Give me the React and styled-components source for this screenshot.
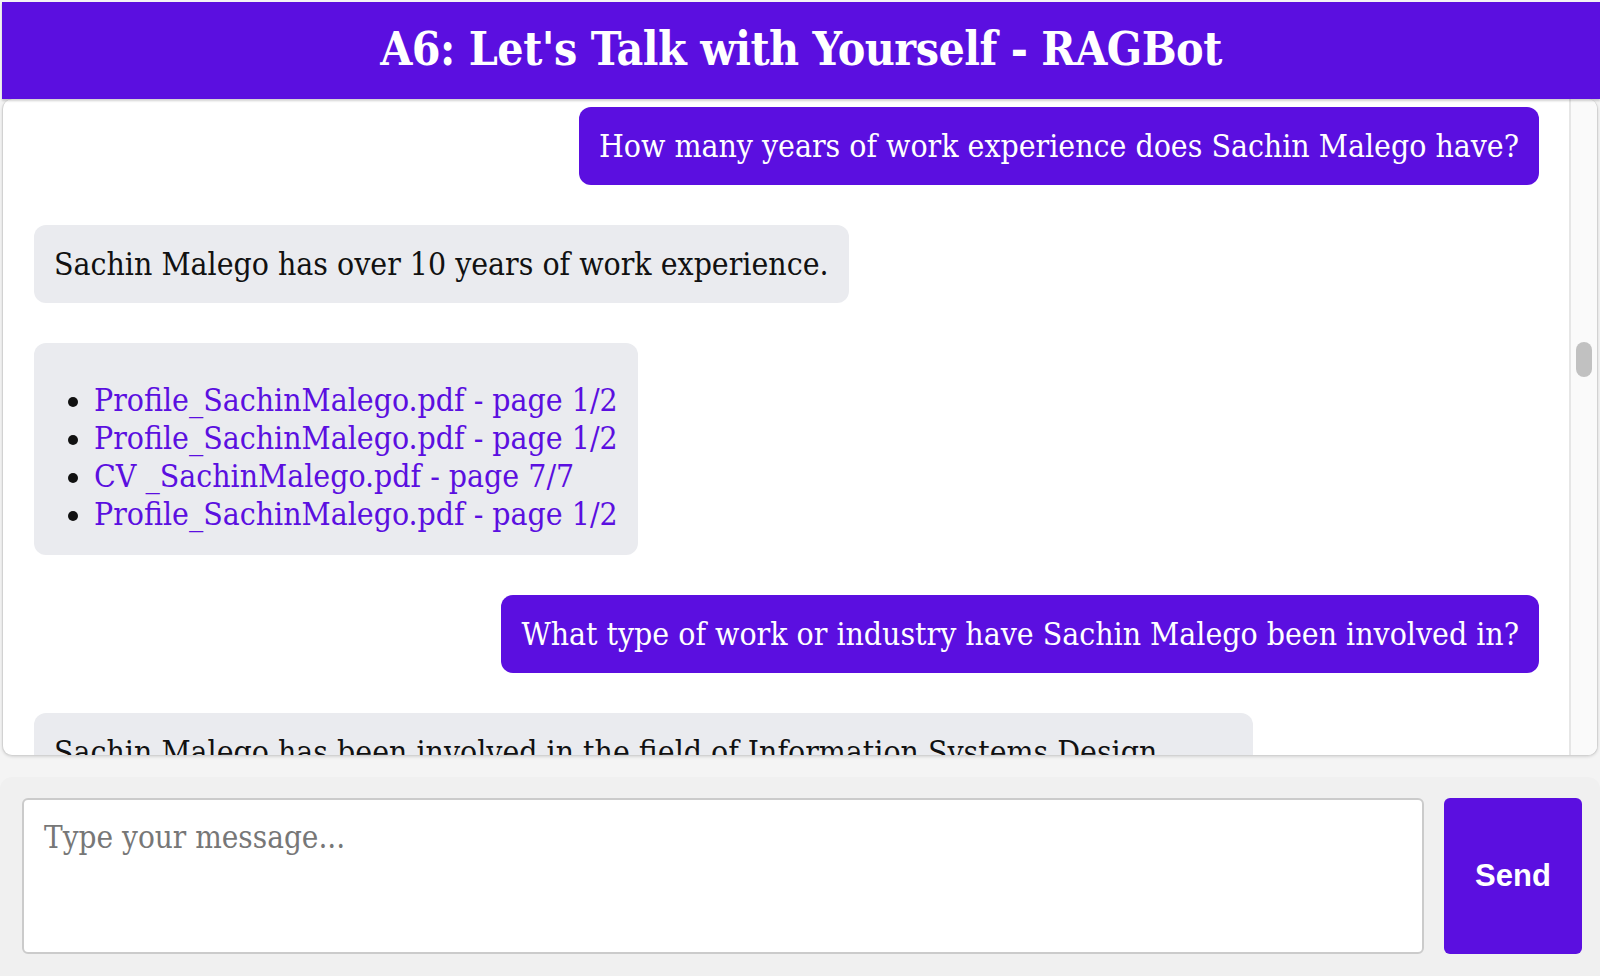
import React from 'react';
import styled, { createGlobalStyle } from 'styled-components';

const PURPLE = '#5b0fe0';
const SERIF = '"DejaVu Serif", "Liberation Serif", serif';

const GlobalStyle = createGlobalStyle`
  html, body {
    margin: 0;
    padding: 0;
    height: 100%;
    background: #f4f4f4;
    overflow: hidden;
  }
  #root {
    height: 100%;
  }
`;

const Page = styled.div`
  display: flex;
  flex-direction: column;
  height: 100vh;
  box-sizing: border-box;
  padding-top: 2px;
`;

const Header = styled.header`
  display: flex;
  align-items: center;
  justify-content: center;
  flex: 0 0 97px;
  box-sizing: border-box;
  padding-bottom: 4px;
  margin-left: 2px;
  background: ${PURPLE};
  box-shadow: 0 2px 2px rgba(0, 0, 0, 0.18);
  position: relative;
  z-index: 1;
`;

const Title = styled.h1`
  margin: 0;
  color: #fff;
  font-family: ${SERIF};
  font-stretch: semi-condensed;
  font-weight: bold;
  font-size: 46px;
  letter-spacing: -0.5px;
`;

const ChatBox = styled.div`
  flex: 1;
  min-height: 0;
  display: flex;
  margin: 0 2px;
  background: #fff;
  border: 1px solid #d2d2d2;
  border-top: none;
  border-radius: 10px;
  box-shadow: 0 1px 3px rgba(0, 0, 0, 0.12);
  overflow: hidden;
`;

const MessageList = styled.div`
  flex: 1;
  min-width: 0;
  overflow: hidden;
  padding: 8px 30px 0 31px;
  display: flex;
  flex-direction: column;
  gap: 40px;
`;

const ScrollTrack = styled.div`
  flex: 0 0 26px;
  display: flex;
  justify-content: center;
  background: #fafafa;
  border-left: 2px solid #e6e6e6;
`;

const ScrollThumb = styled.div`
  width: 16px;
  height: 35px;
  margin-top: 243px;
  border-radius: 8px;
  background: #c1c1c1;
`;

const Bubble = styled.div`
  flex: 0 0 auto;
  align-self: ${p => (p.$user ? 'flex-end' : 'flex-start')};
  max-width: 81%;
  box-sizing: border-box;
  padding: 20px;
  border-radius: 12px;
  background: ${p => (p.$user ? PURPLE : '#eaebef')};
  color: ${p => (p.$user ? '#fff' : '#111')};
  font-family: ${SERIF};
  font-stretch: semi-condensed;
  font-size: 31.7px;
  line-height: 38px;
`;

const SourceList = styled.ul`
  margin: 18px 0 2px;
  padding-left: 40px;
`;

const SourceLink = styled.a`
  color: ${PURPLE};
  text-decoration: none;
`;

const InputBar = styled.form`
  flex: 0 0 auto;
  display: flex;
  gap: 20px;
  margin-top: 21px;
  padding: 21px 18px 22px 22px;
  background: #f0f0f0;
  border-radius: 12px 12px 0 0;
`;

const MessageInput = styled.textarea`
  flex: 1;
  height: 156px;
  box-sizing: border-box;
  padding: 18px 20px;
  border: 2px solid #cbcbcb;
  border-radius: 6px;
  background: #fff;
  resize: none;
  outline: none;
  font-family: ${SERIF};
  font-stretch: semi-condensed;
  font-size: 31.2px;
  line-height: 38px;
  color: #111;

  &::placeholder {
    color: #777;
  }
`;

const SendButton = styled.button`
  flex: 0 0 138px;
  height: 156px;
  border: none;
  border-radius: 6px;
  background: ${PURPLE};
  color: #fff;
  font-family: "Liberation Sans", Arial, sans-serif;
  font-weight: bold;
  font-size: 31px;
  cursor: pointer;
`;

const PROFILE = 'Profile_SachinMalego.pdf - page 1/2';
const CV_LAST = 'CV _SachinMalego.pdf - page 7/7';

const MESSAGES = [
  { role: 'user', text: 'How many years of work experience does Sachin Malego have?' },
  { role: 'bot', text: 'Sachin Malego has over 10 years of work experience.' },
  { role: 'sources', items: [PROFILE, PROFILE, CV_LAST, PROFILE] },
  { role: 'user', text: 'What type of work or industry have Sachin Malego been involved in?' },
  {
    role: 'bot',
    text:
      'Sachin Malego has been involved in the field of Information Systems Design, Development and Management, working on software projects for government organisations and non-profits.',
  },
  { role: 'sources', items: [PROFILE, CV_LAST, PROFILE, CV_LAST] },
];

function Message({ msg }) {
  if (msg.role === 'sources') {
    return (
      <Bubble>
        <SourceList>
          {msg.items.map((s, i) => (
            <li key={i}>
              <SourceLink href="#">{s}</SourceLink>
            </li>
          ))}
        </SourceList>
      </Bubble>
    );
  }
  return <Bubble $user={msg.role === 'user'}>{msg.text}</Bubble>;
}

export default function App() {
  return (
    <>
      <GlobalStyle />
      <Page>
        <Header>
          <Title>A6: Let's Talk with Yourself - RAGBot</Title>
        </Header>
        <ChatBox>
          <MessageList>
            {MESSAGES.map((m, i) => (
              <Message key={i} msg={m} />
            ))}
          </MessageList>
          <ScrollTrack>
            <ScrollThumb />
          </ScrollTrack>
        </ChatBox>
        <InputBar onSubmit={(e) => e.preventDefault()}>
          <MessageInput placeholder="Type your message..." />
          <SendButton type="submit">Send</SendButton>
        </InputBar>
      </Page>
    </>
  );
}
